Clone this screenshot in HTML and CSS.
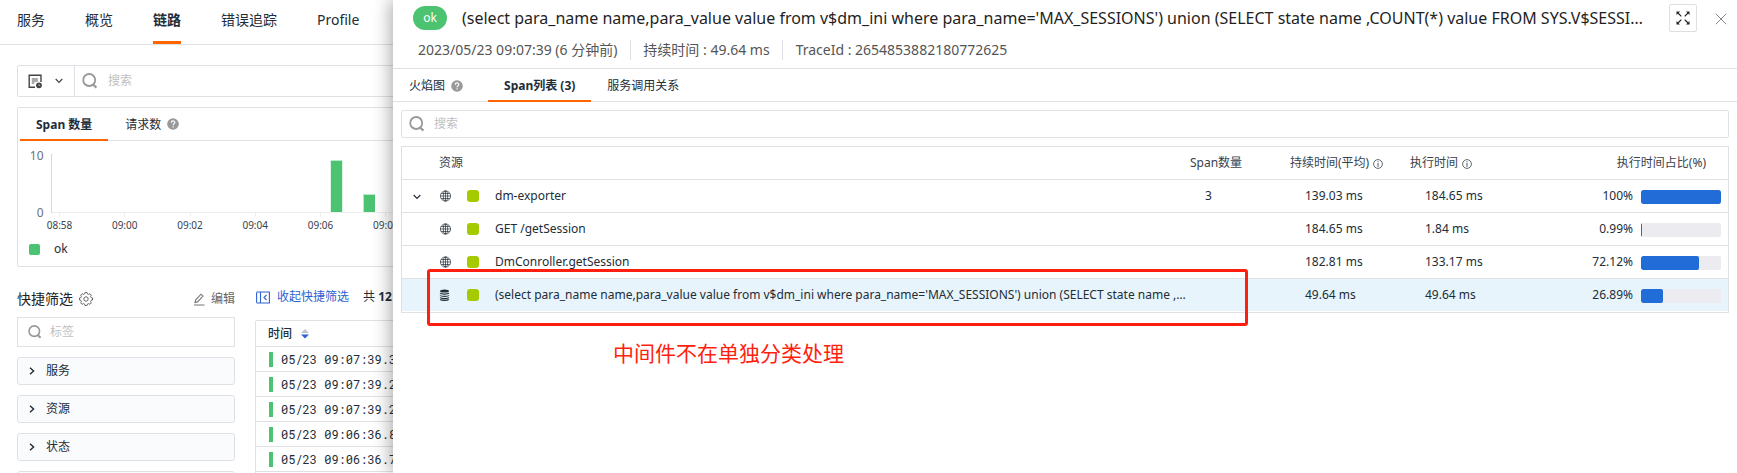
FILE: index.html
```html
<!DOCTYPE html>
<html lang="zh-CN">
<head>
<meta charset="utf-8">
<title>链路</title>
<link rel="stylesheet" href="styles.css">
</head>
<body>
<svg class="defs" width="0" height="0" aria-hidden="true">
  <symbol id="search" viewBox="0 0 16 16"><circle cx="7.200" cy="7" r="6" fill="none" stroke="currentColor" stroke-width="1.800"/><path d="M10.800 11.200 14.400 14.600" stroke="currentColor" stroke-width="2.200"/></symbol>
  <symbol id="help" viewBox="0 0 12 12"><circle cx="6" cy="6" r="5.8" fill="#999"/><path d="M4.3 4.7C4.3 2.4 7.8 2.4 7.8 4.6 7.8 5.8 6.1 5.7 6.1 7.2M6.1 8.2V9.4" fill="none" stroke="#fff" stroke-width="1.2"/></symbol>
  <symbol id="down" viewBox="0 0 8 6"><path d="M.7 1 4 4.4 7.3 1" fill="none" stroke="currentColor" stroke-width="1.2"/></symbol>
  <symbol id="right" viewBox="0 0 6 8"><path d="M1 .7 4.6 4 1 7.3" fill="none" stroke="currentColor" stroke-width="1.4"/></symbol>
  <symbol id="globe" viewBox="0 0 12 12"><g fill="none" stroke="currentColor" stroke-width=".7"><circle cx="6.500" cy="6" r="5.100"/><ellipse cx="6.500" cy="6" rx="2.200" ry="5.100"/><path d="M6.500 1v10M1.500 6h10M2.200 3.500h8.600M2.200 8.500h8.600"/></g></symbol>
  <symbol id="db" viewBox="0 0 12 12"><ellipse cx="5.500" cy="2" rx="4.500" ry="1.600" fill="currentColor"/><path d="M1 4.200c1 1.200 8 1.200 9 0M1 6.500c1 1.200 8 1.200 9 0M1 8.700c1 1.200 8 1.200 9 0M1.200 10.500c1.600 1.200 7 1.200 8.600 0" fill="none" stroke="currentColor" stroke-width="1.100"/></symbol>
  <symbol id="info" viewBox="0 0 10 10"><circle cx="5" cy="5" r="4.4" fill="none" stroke="currentColor" stroke-width=".8"/><path d="M5 2.2v1M5 4v3.8" stroke="currentColor" stroke-width=".9"/></symbol>
</svg>
<div class="page">
  <nav class="nav">
    <span>服务</span><span>概览</span><span class="nav-active">链路</span><span>错误追踪</span><span>Profile</span>
  </nav>
  <div class="query">
    <div class="query-mode">
      <svg width="16" height="16" viewBox="0 0 16 16"><path d="M8 14.200H2.200V2.200H14V9" fill="none" stroke="#444" stroke-width="1.400"/><path d="M4.800 6h6M4.800 8h6M4.800 10h2.500" stroke="#555" stroke-width="1"/><circle cx="12" cy="12.300" r="2.900" fill="#444"/><path d="M12 10.800v1.700h1.300" fill="none" stroke="#ccc" stroke-width=".7"/></svg>
      <svg class="dark" width="8" height="6"><use href="#down"/></svg>
    </div>
    <svg class="grey" width="16" height="16"><use href="#search"/></svg>
    <span class="placeholder">搜索</span>
  </div>
  <section class="card">
    <div class="card-tabs">
      <span class="card-tab card-tab-active">Span 数量</span>
      <span class="card-tab">请求数</span>
      <svg width="12" height="12"><use href="#help"/></svg>
    </div>
    <svg class="chart" width="382" height="88" viewBox="18 141 382 88">
      <path d="M51.5 154v59" stroke="#d6d6dc"/><path d="M52 212.5H400M59.5 213v4M124.5 213v4M190.5 213v4M255.5 213v4M320.5 213v4M385.5 213v4" stroke="#eceef0"/>
      <rect x="330.500" y="160" width="12" height="52" fill="#b9e9c8"/><rect x="331" y="161" width="11" height="51" fill="#4bc371"/>
      <rect x="363" y="194" width="12" height="18" fill="#b9e9c8"/><rect x="364" y="195" width="11" height="17" fill="#4bc371"/>
      <g class="axis-y"><text x="43.500" y="160">10</text><text x="43.500" y="217">0</text></g>
      <g class="axis-x"><text x="59.500" y="229">08:58</text><text x="124.700" y="229">09:00</text><text x="190" y="229">09:02</text><text x="255.200" y="229">09:04</text><text x="320.500" y="229">09:06</text><text x="385.800" y="229">09:08</text></g>
    </svg>
    <div class="legend"><i></i><span>ok</span></div>
  </section>
  <div class="lower">
    <aside class="filters">
      <div class="filters-head">
        <span class="filters-title">快捷筛选</span>
        <svg width="14" height="14" viewBox="-7 -7 14 14"><g fill="none" stroke="#666" stroke-width="1" stroke-linejoin="round"><path d="M-1.030-6.500H1.030L1.370-5.120 2.650-4.590 3.880-5.340 5.340-3.880 4.590-2.650 5.120-1.370 6.500-1.030V1.030L5.120 1.370 4.590 2.650 5.340 3.880 3.880 5.340 2.650 4.590 1.370 5.120 1.030 6.500H-1.030L-1.370 5.120-2.650 4.590-3.880 5.340-5.340 3.880-4.590 2.650-5.120 1.370-6.500 1.030V-1.030L-5.120-1.370-4.590-2.650-5.340-3.880-3.880-5.340-2.650-4.590-1.370-5.120z"/><circle r="2.200"/></g></svg>
        <span class="edit"><svg width="12" height="13" viewBox="0 0 12 13"><path d="M1 12H11.500M2 9.500 2.600 7.100 8 1.200 10 3 4.600 8.900z" fill="none" stroke="#777" stroke-width="1.100"/></svg>编辑</span>
      </div>
      <div class="filters-search"><svg class="grey" width="14" height="14"><use href="#search"/></svg><span class="placeholder">标签</span></div>
      <div class="facet"><svg width="6" height="8"><use href="#right"/></svg>服务</div>
      <div class="facet"><svg width="6" height="8"><use href="#right"/></svg>资源</div>
      <div class="facet"><svg width="6" height="8"><use href="#right"/></svg>状态</div>
      <div class="facet"></div>
    </aside>
    <section class="list">
      <div class="list-head">
        <svg width="14" height="13" viewBox="0 0 14 13"><path d="M.6 1.500V11.500M.6 1H13.400V12H.6M4.500 1V12M10.500 4 8 6.500 10.500 9" fill="none" stroke="#2c62d0" stroke-width="1.100"/></svg>
        <span class="link">收起快捷筛选</span><span>共 <b>12</b></span>
      </div>
      <div class="log">
        <div class="log-head">时间<svg width="8" height="10" viewBox="0 0 8 10"><path d="M0 4 4 0 8 4z" fill="#c0c4cc"/><path d="M0 5.500 4 9.500 8 5.500z" fill="#2c62d0"/></svg></div>
        <div class="log-row"><i></i>05/23 09:07:39.3</div>
        <div class="log-row"><i></i>05/23 09:07:39.2</div>
        <div class="log-row"><i></i>05/23 09:07:39.2</div>
        <div class="log-row"><i></i>05/23 09:06:36.8</div>
        <div class="log-row"><i></i>05/23 09:06:36.7</div>
        <div class="log-row"></div>
      </div>
    </section>
  </div>
</div>

<main class="drawer">
  <header class="head">
    <div class="head-top">
      <span class="badge">ok</span>
      <h1>(select para_name name,para_value value from v$dm_ini where para_name='MAX_SESSIONS') union (SELECT state name ,COUNT(*) value FROM SYS.V$SESSI…</h1>
      <span class="expand"><svg width="14" height="14" viewBox="0 0 14 14"><path d="M5.300 5.300 2 2M8.700 5.300 12 2M5.300 8.700 2 12M8.700 8.700 12 12" stroke="#222" stroke-width="1.200"/><path d="M.5.500h3.500L.5 4zM13.500.500V4L10 .5zM.5 13.500V10L4 13.500zM13.500 13.500H10L13.500 10z" fill="#222"/></svg></span>
      <svg class="close" width="12" height="12" viewBox="0 0 12 12"><path d="M.8.8 11.200 11.200M11.200.8.8 11.200" stroke="#888" stroke-width="1"/></svg>
    </div>
    <div class="meta"><span>2023/05/23 09:07:39 (6 分钟前)</span><span>持续时间 : 49.64 ms</span><span>TraceId : 2654853882180772625</span></div>
  </header>
  <div class="tabs">
    <span class="tab tab-first">火焰图<svg width="12" height="12"><use href="#help"/></svg></span>
    <span class="tab tab-active">Span列表 (3)</span>
    <span class="tab">服务调用关系</span>
  </div>
  <div class="find"><svg class="grey" width="16" height="16"><use href="#search"/></svg><span class="placeholder">搜索</span></div>
  <div class="spans">
    <div class="row row-head"><span></span><span class="wide">资源</span><span>Span数量</span><span>持续时间(平均)<svg width="10" height="10"><use href="#info"/></svg></span><span>执行时间<svg width="10" height="10"><use href="#info"/></svg></span><span class="ratio-head">执行时间占比(%)</span></div>
    <div class="row"><svg class="caret" width="8" height="6"><use href="#down"/></svg><svg width="12" height="12"><use href="#globe"/></svg><i class="dot"></i><span>dm-exporter</span><span class="val">3</span><span class="val">139.03 ms</span><span class="val">184.65 ms</span><span class="ratio">100%<span class="bar"><i style="width:100%"></i></span></span></div>
    <div class="row"><span></span><svg width="12" height="12"><use href="#globe"/></svg><i class="dot"></i><span>GET /getSession</span><span></span><span class="val">184.65 ms</span><span class="val">1.84 ms</span><span class="ratio">0.99%<span class="bar"><i style="width:0.99%"></i></span></span></div>
    <div class="row"><span></span><svg width="12" height="12"><use href="#globe"/></svg><i class="dot"></i><span>DmConroller.getSession</span><span></span><span class="val">182.81 ms</span><span class="val">133.17 ms</span><span class="ratio">72.12%<span class="bar"><i style="width:72.12%"></i></span></span></div>
    <div class="row row-on"><span></span><svg width="12" height="12"><use href="#db"/></svg><i class="dot"></i><span>(select para_name name,para_value value from v$dm_ini where para_name='MAX_SESSIONS') union (SELECT state name ,…</span><span></span><span class="val">49.64 ms</span><span class="val">49.64 ms</span><span class="ratio">26.89%<span class="bar"><i style="width:26.89%"></i></span></span></div>
  </div>
  <p class="note">中间件不在单独分类处理</p>
</main>
<div class="marker"></div>
</body>
</html>
```
FILE: styles.css
```css
* { box-sizing: border-box; }
body { margin: 0; width: 1737px; height: 473px; overflow: hidden; position: relative; background: #fff; color: #222d38; font: 12px/18px "Noto Sans", "Noto Sans CJK SC", sans-serif; }
svg { display: block; flex: none; }
.defs { position: absolute; }
.grey { color: #999; }
.dark { color: #444; }
.placeholder { color: #bfbfbf; }

/* Page behind the drawer */
.page { width: 420px; height: 473px; overflow: hidden; }
.nav { display: flex; gap: 40px; height: 45px; padding-left: 17px; border-bottom: 1px solid #dfe1e6; font-size: 14px; line-height: 40px; }
.nav span { flex: none; height: 44px; }
.nav-active { font-weight: 700; border-bottom: 3px solid #ff6600; }
.query { display: flex; align-items: center; height: 32px; margin: 20px 0 0 17px; border: 1px solid #dfe1e6; border-radius: 2px; }
.query .placeholder { margin-left: 10px; }
.query-mode { display: flex; align-items: center; gap: 12px; width: 57px; height: 30px; padding-left: 9px; margin-right: 7px; border-right: 1px solid #dfe1e6; }
.card { height: 160px; margin: 10px 0 0 17px; border: 1px solid #dfe1e6; border-radius: 2px; }
.card-tabs { display: flex; align-items: center; height: 33px; margin-left: 2px; border-bottom: 1px solid #dfe1e6; }
.card-tab { padding: 0 16px; line-height: 33px; }
.card-tab + .card-tab { padding: 0 6px 0 17px; }
.card-tab-active { height: 33px; border-bottom: 2px solid #ff6600; font-weight: 700; }
.chart { overflow: visible; }
.axis-y { font-size: 12px; text-anchor: end; fill: #6e7079; }
.axis-x { font-size: 10px; text-anchor: middle; fill: #39424d; }
.legend { display: flex; align-items: center; gap: 14px; margin: 11px 0 0 11px; }
.legend i { width: 11px; height: 11px; border-radius: 2px; background: #4bc371; }
.lower { display: flex; }
.filters { width: 218px; margin: 20px 0 0 17px; flex: none; }
.filters-head { display: flex; align-items: center; gap: 6px; height: 24px; color: #222; }
.filters-title { font-size: 14px; }
.edit { display: flex; align-items: center; gap: 6px; margin-left: auto; color: #666; }
.filters-search { display: flex; align-items: center; gap: 8px; height: 30px; margin-top: 6px; padding-left: 10px; border: 1px solid #dfe1e6; }
.facet { display: flex; align-items: center; gap: 11px; height: 28px; margin-top: 10px; padding-left: 11px; border: 1px solid #dfe1e6; border-radius: 3px; background: #fafbfd; }
.list { width: 170px; margin: 20px 0 0 20px; flex: none; }
.list-head { display: flex; align-items: center; height: 20px; padding-left: 1px; }
.list-head .link { margin: 0 14px 0 7px; color: #2c62d0; }
.log { margin-top: 13px; border: 1px solid #dfe1e6; border-radius: 2px; }
.log-head { display: flex; align-items: center; gap: 9px; height: 26px; padding-left: 12px; border-bottom: 1px solid #dfe1e6; font-weight: 500; }
.log-row { display: flex; align-items: center; gap: 8px; height: 25px; padding-left: 13px; border-bottom: 1px solid #dfe1e6; font-family: "Roboto Mono", "Liberation Mono", monospace; white-space: nowrap; }
.log-row i { width: 4px; height: 15px; background: #4bc371; }

/* Trace detail drawer */
.drawer { position: absolute; left: 393px; top: 0; width: 1344px; height: 473px; background: #fff; box-shadow: -3px 0 16px rgba(0, 0, 0, .32); }
.head { height: 69px; border-bottom: 1px solid #dfe1e6; }
.head-top { display: flex; align-items: center; height: 36px; padding-left: 20px; }
.badge { width: 34px; height: 24px; border-radius: 12px; background: #4bc371; color: #fff; text-align: center; line-height: 23px; }
h1 { width: 1207px; margin: 0 0 0 15px; color: #1f1f1f; font-size: 16px; font-weight: 400; line-height: 24px; white-space: nowrap; }
.expand { display: grid; place-items: center; width: 28px; height: 28px; border: 1px solid #dfdfdf; border-radius: 2px; }
.close { margin: 2px 0 0 18px; }
.meta { display: flex; padding: 4px 0 0 25px; color: #555; font-size: 14px; line-height: 20px; }
.meta span + span { margin-left: 12.5px; padding-left: 12.5px; border-left: 1px solid #dfe1e6; }
.tabs { display: flex; height: 33px; border-bottom: 1px solid #dfe1e6; line-height: 33px; }
.tab { height: 33px; padding: 0 16px; }
.tab-first { display: flex; align-items: center; gap: 6px; padding-right: 25px; }
.tab-active { border-bottom: 2px solid #ff6600; font-weight: 700; }
.find { display: flex; align-items: center; gap: 9px; height: 28px; margin: 8px 8px 8px; padding-left: 7px; border: 1px solid #dfe1e6; border-radius: 2px; }
.spans { height: 167px; margin: 0 8px; border: 1px solid #dfe1e6; }
.row { display: grid; grid-template-columns: 37px 28px 28px 695px 100px 120px 190px 121px; align-items: center; height: 33px; border-bottom: 1px solid #dfe1e6; white-space: nowrap; }
.row-head { color: #39424d; }
.row-head svg { display: inline-block; margin-left: 4px; vertical-align: -2px; }
.wide { grid-column: span 3; }
.caret { margin: 1px 0 0 11px; }
.dot { width: 12px; height: 12px; border-radius: 3px; background: #a5cb00; }
.val { padding-left: 15px; }
.ratio-head { padding-right: 15px; text-align: right; }
.ratio { display: flex; justify-content: flex-end; align-items: center; gap: 8px; }
.bar { flex: none; width: 80px; height: 14px; margin-top: 2px; border-radius: 2px; background: #ebebf0; overflow: hidden; }
.bar i { display: block; height: 14px; border-radius: 2px; background: #226cd8; }
.row-on { height: 32px; border-bottom: 0; background: #e8f4fb; }
.note { margin: 25px 0 0 220px; color: #ff1f0f; font-size: 21px; line-height: 30px; }

/* Highlight frame */
.marker { position: absolute; left: 427px; top: 269px; width: 821px; height: 57px; border: 3px solid #ff1f0f; border-radius: 3px; }
```
